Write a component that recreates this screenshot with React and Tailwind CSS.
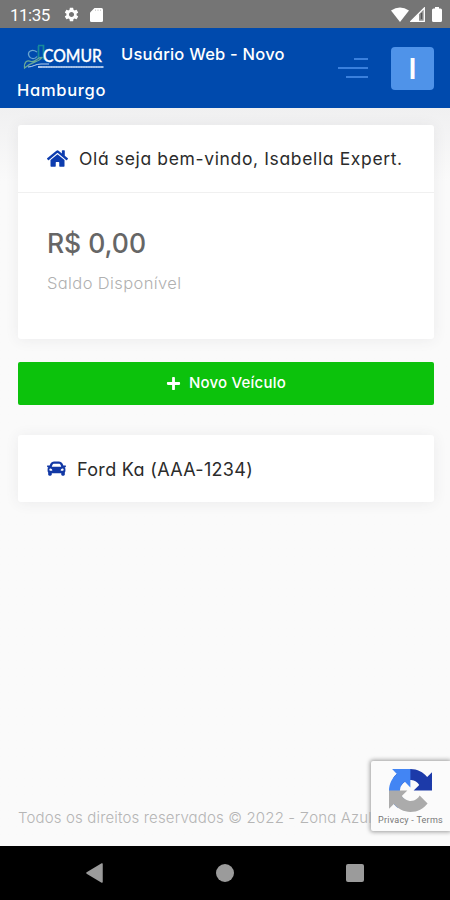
import React from "react";
import { FaHome, FaCar, FaPlus } from "react-icons/fa";
import { MdSettings } from "react-icons/md";

function StatusBar() {
  return (
    <div className="flex h-7 shrink-0 items-center justify-between bg-[#757575] pr-2 pl-[10px] text-white">
      <div className="flex items-center">
        <span className="w-[53px] pt-px font-[Roboto] text-[17px] leading-7 tracking-[-0.5px] whitespace-nowrap">11:35</span>
        <MdSettings className="mt-px size-[17px]" />
        <svg className="mt-px ml-[10px] h-[14px] w-[13px]" viewBox="0 0 13 14">
          <path d="M4.5 0H11.5Q13 0 13 1.500V12.500Q13 14 11.500 14H1.500Q0 14 0 12.500V4.500Z" fill="currentColor" />
          <path d="M5.500 1.500v1.500M8 1.500v1.500M10.500 1.500v1.500" stroke="#c4c4c4" strokeWidth=".8" />
        </svg>
      </div>
      <div className="flex items-center">
        <svg className="h-[15px] w-[18px]" viewBox="0 0 18 15">
          <path d="M0 3.500Q9 -2.500 18 3.500L9 15Z" fill="currentColor" />
        </svg>
        <svg className="ml-px h-[15px] w-[15px]" viewBox="0 0 15 15">
          <path d="M1 14.300L14.300 1V14.300Z" fill="#8f8f8f" stroke="currentColor" strokeWidth="1.300" />
          <path d="M1 14.500L9 6.500V14.500Z" fill="currentColor" />
          <path d="M11.500 6v6" stroke="#555" strokeWidth="1.300" />
        </svg>
        <svg className="ml-[7px] h-[15px] w-[10px]" viewBox="0 0 10 15">
          <path d="M3 0H7V1.500H8.500Q10 1.500 10 3V13.500Q10 15 8.500 15H1.500Q0 15 0 13.500V3Q0 1.500 1.500 1.500H3Z" fill="currentColor" />
        </svg>
      </div>
    </div>
  );
}

function ComurLogo() {
  return (
    <svg className="h-[28px] w-[82px] shrink-0 overflow-visible" viewBox="0 0 82 28" fill="none">
      <path d="M15.500 4V16M15 3.500H20.500V17.500" stroke="#168a9b" strokeWidth="1.700" />
      <path d="M14 10C9 6.500 4 9.500 6 14C7.500 17.500 12 17.500 14 14.500" stroke="#69a5cf" strokeWidth="1.300" />
      <path d="M1.500 26C1 20 4 17.500 8 19.500C12 21 15 14.500 19 15.500C15 21 9 19 1.500 26Z" stroke="#69a998" strokeWidth="1.200" />
      <path d="M5 25C10 25 12 22 18 22H26" stroke="#b8d0ee" strokeWidth="1" />
      <text x="20" y="20" fill="white" stroke="white" strokeWidth=".3" fontFamily="Lato, sans-serif" fontSize="16.500" textLength="59" lengthAdjust="spacingAndGlyphs">COMUR</text>
      <path d="M15 25H80.500" stroke="#a9c3e8" strokeWidth="2" />
      <path d="M19 25H79" stroke="#7ea5da" strokeWidth=".8" strokeDasharray="1.500 1" />
    </svg>
  );
}

function Header() {
  return (
    <header className="flex h-20 shrink-0 bg-[#004aad] pr-4 pl-[17px] text-white">
      <div className="w-[321px] pt-2 text-[16.5px] leading-9 font-medium">
        <div className="flex h-9 items-center whitespace-nowrap">
          <span className="ml-[6px] flex w-[98px] items-center pt-1"><ComurLogo /></span>
          <span className="tracking-[0.23px]">Usuário Web - Novo</span>
        </div>
        <div className="tracking-[0.7px]">Hamburgo</div>
      </div>
      <div className="flex h-20 items-center">
        <div className="flex w-[30px] flex-col items-end gap-[7px]">
          <span className="h-[2px] w-[14px] bg-[#3a80dd]" />
          <span className="h-[2px] w-[30px] bg-[#3a80dd]" />
          <span className="h-[2px] w-[22px] bg-[#3a80dd]" />
        </div>
        <div className="ml-[23px] flex size-[43px] items-center justify-center rounded-[4px] bg-[#4f93e9]">
          <span className="text-[29px] leading-none font-semibold">I</span>
        </div>
      </div>
    </header>
  );
}

function RecaptchaBadge() {
  return (
    <div className="absolute top-[761px] right-0 flex h-[70px] w-[79px] flex-col items-center rounded-l-[2px] bg-[#fbfbfb] pt-2 shadow-[0_0_4px_1px_#9b9b9b]">
      <svg className="size-[43px]" viewBox="0 0 64 64">
        <path fill="#1c3aa9" d="M64 31.955l-.033-1.370V4.687l-7.160 7.160C50.948 4.674 42.033.093 32.050.093c-10.400 0-19.622 4.960-25.458 12.640l11.736 11.860a15.550 15.550 0 0 1 4.754-5.334c2.050-1.600 4.952-2.906 8.968-2.906.485 0 .86.057 1.135.163 4.976.393 9.288 3.140 11.828 7.124l-8.307 8.307L64 31.953" />
        <path fill="#4285f4" d="M31.862.094l-1.370.033H4.594l7.160 7.160C4.580 13.147 0 22.060 0 32.046c0 10.400 4.960 19.622 12.640 25.458L24.500 45.768a15.550 15.550 0 0 1-5.334-4.754c-1.600-2.050-2.906-4.952-2.906-8.968 0-.485.057-.86.163-1.135.393-4.976 3.140-9.288 7.124-11.828l8.307 8.307L31.860.095" />
        <path fill="#ababab" d="M.001 32.045l.033 1.370v25.898l7.160-7.160c5.860 7.173 14.774 11.754 24.760 11.754 10.400 0 19.622-4.960 25.458-12.640l-11.736-11.860a15.550 15.550 0 0 1-4.754 5.334c-2.050 1.600-4.952 2.906-8.968 2.906-.485 0-.86-.057-1.135-.163-4.976-.393-9.288-3.140-11.828-7.124l8.307-8.307c-10.522.040-22.400.066-27.295-.005" />
      </svg>
      <div className="mt-[2px] font-[Roboto] text-[9px] leading-[12px] tracking-[0.25px] whitespace-nowrap text-[#777]">Privacy - Terms</div>
    </div>
  );
}

function NavBar() {
  return (
    <nav className="flex h-[54px] shrink-0 items-center justify-between bg-black px-[86px]">
      <svg className="h-5 w-[17px]" viewBox="0 0 17 20">
        <path d="M1 10L16 1V19Z" fill="#9b9b9b" stroke="#9b9b9b" strokeWidth="1.500" strokeLinejoin="round" />
      </svg>
      <span className="size-[18px] rounded-full bg-[#9b9b9b]" />
      <span className="size-[18px] rounded-[2px] bg-[#9b9b9b]" />
    </nav>
  );
}

export default function App() {
  return (
    <div className="relative flex h-[900px] w-[450px] flex-col overflow-hidden bg-[#fafafa] font-[Inter,sans-serif] [font-feature-settings:'cv11']">
      <StatusBar />
      <Header />
      <main className="flex min-h-0 flex-1 flex-col bg-linear-to-b from-[#f0f0f1] from-0% to-[#fafafa] to-10% pr-4 pl-[18px]">
        <section className="mt-[17px] h-[214px] shrink-0 rounded-[3px] bg-white shadow-[0_1px_14px_rgba(60,60,80,0.08)]">
          <div className="flex h-[68px] items-center border-b border-[#f0f0f0] pl-[29px] text-[17.5px] tracking-[0.64px] whitespace-nowrap text-[#2b2b2b]">
            <FaHome className="size-[21px] text-[#0d3cae]" />
            <span className="ml-[11px] pt-px">Olá seja bem-vindo, Isabella Expert.</span>
          </div>
          <div className="pt-[32px] pl-[29px]">
            <div className="text-[26.5px] leading-9 font-medium tracking-[-0.05px] text-[#666]">R$ 0,00</div>
            <div className="mt-[10px] text-[16.5px] leading-6 font-light tracking-[0.38px] text-[#b0b0b0]">Saldo Disponível</div>
          </div>
        </section>
        <button className="mt-[23px] flex h-[43px] shrink-0 items-center justify-center gap-[8px] rounded-[2px] bg-[#0cc20c] text-[15px] font-medium tracking-[0.2px] text-white">
          <FaPlus className="size-[15px]" />
          <span>Novo Veículo</span>
        </button>
        <section className="mt-[30px] flex h-[67px] shrink-0 items-center rounded-[3px] bg-white pl-[29px] text-[18px] tracking-[0.32px] text-[#2b2b2b] shadow-[0_1px_14px_rgba(60,60,80,0.08)]">
          <FaCar className="size-[19px] text-[#1238a5]" />
          <span className="ml-[11px] pt-px">Ford Ka (AAA-1234)</span>
        </section>
        <footer className="mt-auto mb-4 text-[15px] leading-6 font-light tracking-[0.15px] whitespace-nowrap text-[#b5b5b5]">
          Todos os direitos reservados © 2022 - Zona Azul
        </footer>
      </main>
      <NavBar />
      <RecaptchaBadge />
    </div>
  );
}
